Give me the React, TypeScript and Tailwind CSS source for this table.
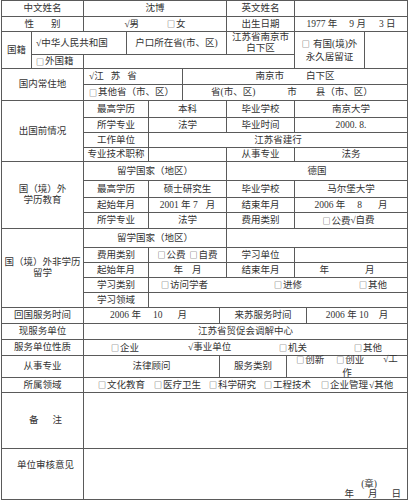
import React from "react";

const C =
  "bg-white flex items-center justify-center text-center whitespace-nowrap";

const B = () => (
  <span className="mr-px font-['Noto_Sans_CJK_SC',sans-serif] text-[8px]">□</span>
);

export default function App() {
  return (
    <div className="w-[409px] h-[500px] bg-white font-['Liberation_Serif','Noto_Sans_CJK_SC',serif] text-[9.5px] leading-[11px] text-[#333]">
      <div className="ml-px grid w-[407px] gap-px bg-[#5a5a5a] p-px grid-cols-[29px_51px_42px_21px_33px_36px_6px_59px_7px_11px_57px_42px] grid-rows-[15px_14px_22px_13px_15px_15px_16px_14px_14px_13px_18px_16px_14px_15px_18px_14px_14px_14px_14px_15px_15px_15px_21px_14px_55px_50px]">
        {/* Row 1 */}
        <div className={`${C} col-span-2`}>中文姓名</div>
        <div className={`${C} col-span-5`}>沈博</div>
        <div className={`${C} col-span-2`}>英文姓名</div>
        <div className={`${C} col-span-3`}></div>

        {/* Row 2 */}
        <div className={`${C} col-span-2 gap-[17px]`}>
          <span>性</span>
          <span>别</span>
        </div>
        <div className={`${C} col-span-5 gap-[28px]`}>
          <span>√男</span>
          <span><B />女</span>
        </div>
        <div className={`${C} col-span-2`}>出生日期</div>
        <div className={`${C} col-span-3`}>
          <span>1977 年</span>
          <span className="ml-[12px]">9 月</span>
          <span className="ml-[13px]">3 日</span>
        </div>

        {/* Row 3 */}
        <div className={`${C} row-span-2`}>国籍</div>
        <div className={`${C} col-span-2 justify-start pl-[4px]`}>√中华人民共和国</div>
        <div className={`${C} col-span-4`}>户口所在省(市、区)</div>
        <div className={`${C} col-span-2 flex-col`}>
          <span>江苏省南京市</span>
          <span>白下区</span>
        </div>
        <div className={`${C} col-span-2 row-span-2 flex-col leading-[13px]`}>
          <span><B /> 有国(境)外</span>
          <span>永久居留证</span>
        </div>
        <div className={`${C} row-span-2`}></div>

        {/* Row 4 */}
        <div className={`${C} justify-start pl-[4px]`}><B />外国籍</div>
        <div className={`${C} col-span-7`}></div>

        {/* Row 5 */}
        <div className={`${C} col-span-2 row-span-2`}>国内常住地</div>
        <div className={`${C} col-span-3 justify-start pl-[5px]`}>
          <span>√江</span>
          <span className="ml-[7px]">苏</span>
          <span className="ml-[7px]">省</span>
        </div>
        <div className={`${C} col-span-7 gap-[22px]`}>
          <span>南京市</span>
          <span>白下区</span>
        </div>

        {/* Row 6 */}
        <div className={`${C} col-span-3 justify-start pl-[5px]`}><B />其他省（市、区）</div>
        <div className={`${C} col-span-7 justify-start pl-[28px]`}>
          <span>省(市、区)</span>
          <span className="ml-[32px]">市</span>
          <span className="ml-[19px]">县（市、区）</span>
        </div>

        {/* Row 7 */}
        <div className={`${C} col-span-2 row-span-4`}>出国前情况</div>
        <div className={`${C} col-span-2`}>最高学历</div>
        <div className={`${C} col-span-3`}>本科</div>
        <div className={`${C} col-span-2`}>毕业学校</div>
        <div className={`${C} col-span-3`}>南京大学</div>

        {/* Row 8 */}
        <div className={`${C} col-span-2`}>所学专业</div>
        <div className={`${C} col-span-3`}>法学</div>
        <div className={`${C} col-span-2`}>毕业时间</div>
        <div className={`${C} col-span-3`}>2000. 8.</div>

        {/* Row 9 */}
        <div className={`${C} col-span-2`}>工作单位</div>
        <div className={`${C} col-span-8`}>江苏省建行</div>

        {/* Row 10 */}
        <div className={`${C} col-span-2`}>专业技术职称</div>
        <div className={`${C} col-span-3`}></div>
        <div className={`${C} col-span-2`}>从事专业</div>
        <div className={`${C} col-span-3`}>法务</div>

        {/* Row 11 */}
        <div className={`${C} col-span-2 row-span-4 flex-col`}>
          <span>国（境）外</span>
          <span>学历教育</span>
        </div>
        <div className={`${C} col-span-5`}>留学国家（地区）</div>
        <div className={`${C} col-span-5`}>德国</div>

        {/* Row 12 */}
        <div className={`${C} col-span-2`}>最高学历</div>
        <div className={`${C} col-span-3`}>硕士研究生</div>
        <div className={`${C} col-span-2`}>毕业学校</div>
        <div className={`${C} col-span-3`}>马尔堡大学</div>

        {/* Row 13 */}
        <div className={`${C} col-span-2`}>起始年月</div>
        <div className={`${C} col-span-3`}>
          <span>2001 年 7</span>
          <span className="ml-[8px]">月</span>
        </div>
        <div className={`${C} col-span-2`}>结束年月</div>
        <div className={`${C} col-span-3`}>
          <span>2006 年</span>
          <span className="ml-[12px]">8</span>
          <span className="ml-[16px]">月</span>
        </div>

        {/* Row 14 */}
        <div className={`${C} col-span-2`}>所学专业</div>
        <div className={`${C} col-span-3`}>法学</div>
        <div className={`${C} col-span-2`}>费用类别</div>
        <div className={`${C} col-span-3 justify-between pl-[11px] pr-[16px]`}>
          <span><B />公费</span>
          <span>√自费</span>
        </div>

        {/* Row 15 */}
        <div className={`${C} col-span-2 row-span-5 flex-col`}>
          <span>国（境）外非学历</span>
          <span>留学</span>
        </div>
        <div className={`${C} col-span-5`}>留学国家（地区）</div>
        <div className={`${C} col-span-5`}></div>

        {/* Row 16 */}
        <div className={`${C} col-span-2`}>费用类别</div>
        <div className={`${C} col-span-3 gap-[4px]`}>
          <span><B />公费</span>
          <span><B />自费</span>
        </div>
        <div className={`${C} col-span-2`}>学习单位</div>
        <div className={`${C} col-span-3`}></div>

        {/* Row 17 */}
        <div className={`${C} col-span-2`}>起始年月</div>
        <div className={`${C} col-span-3 gap-[9px]`}>
          <span>年</span>
          <span>月</span>
        </div>
        <div className={`${C} col-span-2`}>结束年月</div>
        <div className={`${C} col-span-3 gap-[36px] pr-[8px]`}>
          <span>年</span>
          <span>月</span>
        </div>

        {/* Row 18 */}
        <div className={`${C} col-span-2`}>学习类别</div>
        <div className={`${C} col-span-8 justify-start pl-[12px]`}>
          <span className="w-[113px] text-left"><B />访问学者</span>
          <span className="w-[85px] text-left"><B />进修</span>
          <span className="text-left"><B />其他</span>
        </div>

        {/* Row 19 */}
        <div className={`${C} col-span-2`}>学习领域</div>
        <div className={`${C} col-span-8`}></div>

        {/* Row 20 */}
        <div className={`${C} col-span-2`}>回国服务时间</div>
        <div className={`${C} col-span-4 pr-[6px]`}>
          <span>2006 年</span>
          <span className="ml-[12px]">10</span>
          <span className="ml-[15px]">月</span>
        </div>
        <div className={`${C} col-span-4`}>来苏服务时间</div>
        <div className={`${C} col-span-2`}>
          <span>2006 年 10</span>
          <span className="ml-[10px]">月</span>
        </div>

        {/* Row 21 */}
        <div className={`${C} col-span-2`}>现服务单位</div>
        <div className={`${C} col-span-10`}>江苏省贸促会调解中心</div>

        {/* Row 22 */}
        <div className={`${C} col-span-2`}>服务单位性质</div>
        <div className={`${C} col-span-10 justify-start pl-[27px]`}>
          <span className="w-[77px] text-left"><B />企业</span>
          <span className="w-[91px] text-left">√事业单位</span>
          <span className="w-[75px] text-left"><B />机关</span>
          <span className="text-left"><B />其他</span>
        </div>

        {/* Row 23 */}
        <div className={`${C} col-span-2`}>从事专业</div>
        <div className={`${C} col-span-4`}>法律顾问</div>
        <div className={`${C} col-span-2`}>服务类别</div>
        <div className={`${C} col-span-4 flex-col justify-start leading-[13px]`}>
          <div className="-mt-[3px] flex">
            <span><B />创新</span>
            <span className="ml-[12px]"><B />创业</span>
            <span className="ml-[19px]">√工</span>
          </div>
          <div>作</div>
        </div>

        {/* Row 24 */}
        <div className={`${C} col-span-2`}>所属领域</div>
        <div className={`${C} col-span-10 justify-start pl-[14px]`}>
          <span className="w-[56px] text-left"><B />文化教育</span>
          <span className="w-[55px] text-left"><B />医疗卫生</span>
          <span className="w-[55px] text-left"><B />科学研究</span>
          <span className="w-[57px] text-left"><B />工程技术</span>
          <span className="w-[48px] text-left"><B />企业管理</span>
          <span className="text-left">√其他</span>
        </div>

        {/* Row 25 */}
        <div className={`${C} col-span-2 gap-[14px] pl-[6px]`}>
          <span>备</span>
          <span>注</span>
        </div>
        <div className={`${C} col-span-10`}></div>

        {/* Row 26 */}
        <div className={`${C} col-span-2 pb-[18px] pl-[6px]`}>单位审核意见</div>
        <div className={`${C} col-span-10 flex-col items-end justify-end leading-[10px]`}>
          <span className="mr-[30px]">(章)</span>
          <div className="mr-[6px] flex gap-[14px]">
            <span>年</span>
            <span>月</span>
            <span>日</span>
          </div>
        </div>
      </div>
    </div>
  );
}
